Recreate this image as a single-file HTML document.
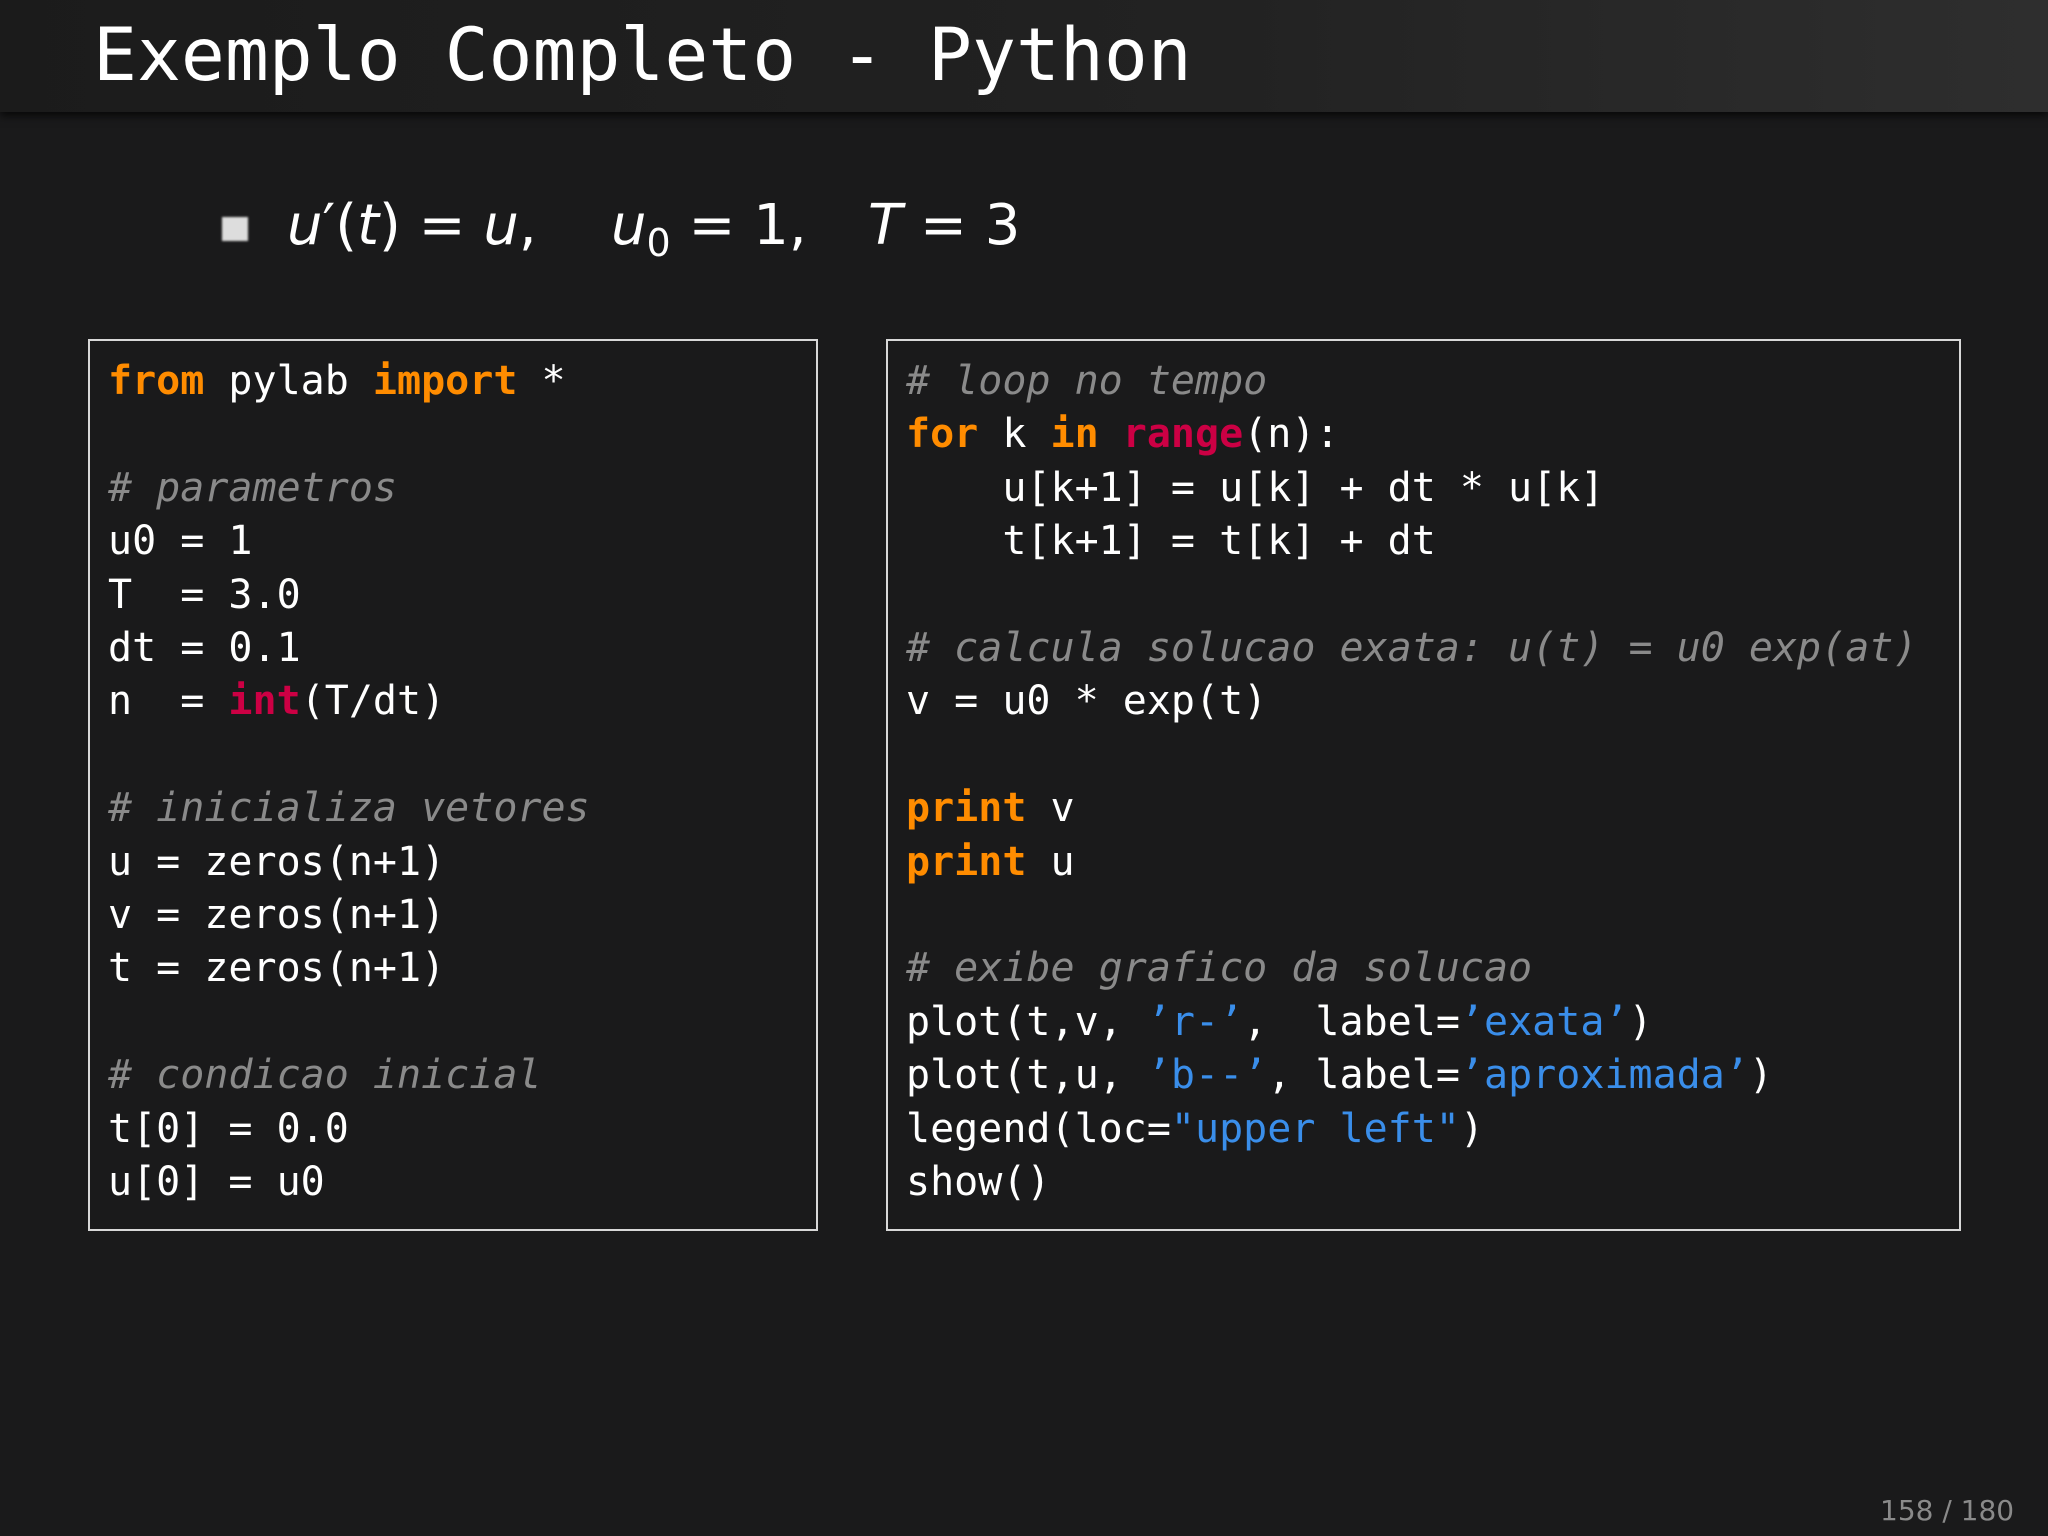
<!DOCTYPE html>
<html><head><meta charset="utf-8"><style>
html,body{margin:0;padding:0}
body{width:2048px;height:1536px;background:#1a1a1b;position:relative;overflow:hidden;font-family:"DejaVu Sans Mono","Liberation Mono",monospace;color:#fff}
.bar{position:absolute;left:0;top:0;width:2048px;height:112px;background:linear-gradient(90deg,#1b1b1b 0%,#222 60%,#2e2e2e 100%);box-shadow:0 4px 8px rgba(0,0,0,.7)}
.title{position:absolute;left:93px;top:10px;font-size:73px;line-height:92px;color:#fff;white-space:pre}
.eq{position:absolute;top:186px;font-family:"DejaVu Sans","Liberation Sans",sans-serif;font-size:56px;color:#fff;white-space:pre;line-height:80px}
.eq i{font-style:italic}
.bul{position:absolute;left:222px;top:217px;width:26px;height:24px;background:#ddd;filter:blur(1px)}
.box{position:absolute;top:339px;height:892px;border:2px solid #d8d8d8;box-sizing:border-box}
pre{margin:0;position:absolute;top:14px;font-family:"DejaVu Sans Mono","Liberation Mono",monospace;font-size:40px;line-height:53.4px;color:#fff}
.k{color:#ff8c00;font-weight:bold}
.r{color:#cc0044;font-weight:bold}
.c{color:#8a8a8a;font-style:italic}
.s{color:#3a8eea}
.pg{position:absolute;left:1880px;top:1494px;font-family:"DejaVu Sans","Liberation Sans",sans-serif;font-size:28px;color:#8a8a8a}
</style></head><body>
<div class="bar"></div>
<div class="title">Exemplo Completo - Python</div>
<div class="bul"></div>
<div class="eq" style="left:287px"><i>u</i>′(<i>t</i>) = <i>u</i>,</div>
<div class="eq" style="left:611px"><i>u</i><sub style="font-size:38px">0</sub> = 1,</div>
<div class="eq" style="left:868px"><i>T</i> = 3</div>
<div class="box" style="left:88px;width:730px"><pre style="left:18px"><span class="k">from</span> pylab <span class="k">import</span> *

<span class="c"># parametros</span>
u0 = 1
T  = 3.0
dt = 0.1
n  = <span class="r">int</span>(T/dt)

<span class="c"># inicializa vetores</span>
u = zeros(n+1)
v = zeros(n+1)
t = zeros(n+1)

<span class="c"># condicao inicial</span>
t[0] = 0.0
u[0] = u0</pre></div>
<div class="box" style="left:886px;width:1075px"><pre style="left:18px"><span class="c"># loop no tempo</span>
<span class="k">for</span> k <span class="k">in</span> <span class="r">range</span>(n):
    u[k+1] = u[k] + dt * u[k]
    t[k+1] = t[k] + dt

<span class="c"># calcula solucao exata: u(t) = u0 exp(at)</span>
v = u0 * exp(t)

<span class="k">print</span> v
<span class="k">print</span> u

<span class="c"># exibe grafico da solucao</span>
plot(t,v, <span class="s">’r-’</span>,  label=<span class="s">’exata’</span>)
plot(t,u, <span class="s">’b--’</span>, label=<span class="s">’aproximada’</span>)
legend(loc=<span class="s">"upper left"</span>)
show()</pre></div>
<div class="pg">158 / 180</div>
</body></html>
